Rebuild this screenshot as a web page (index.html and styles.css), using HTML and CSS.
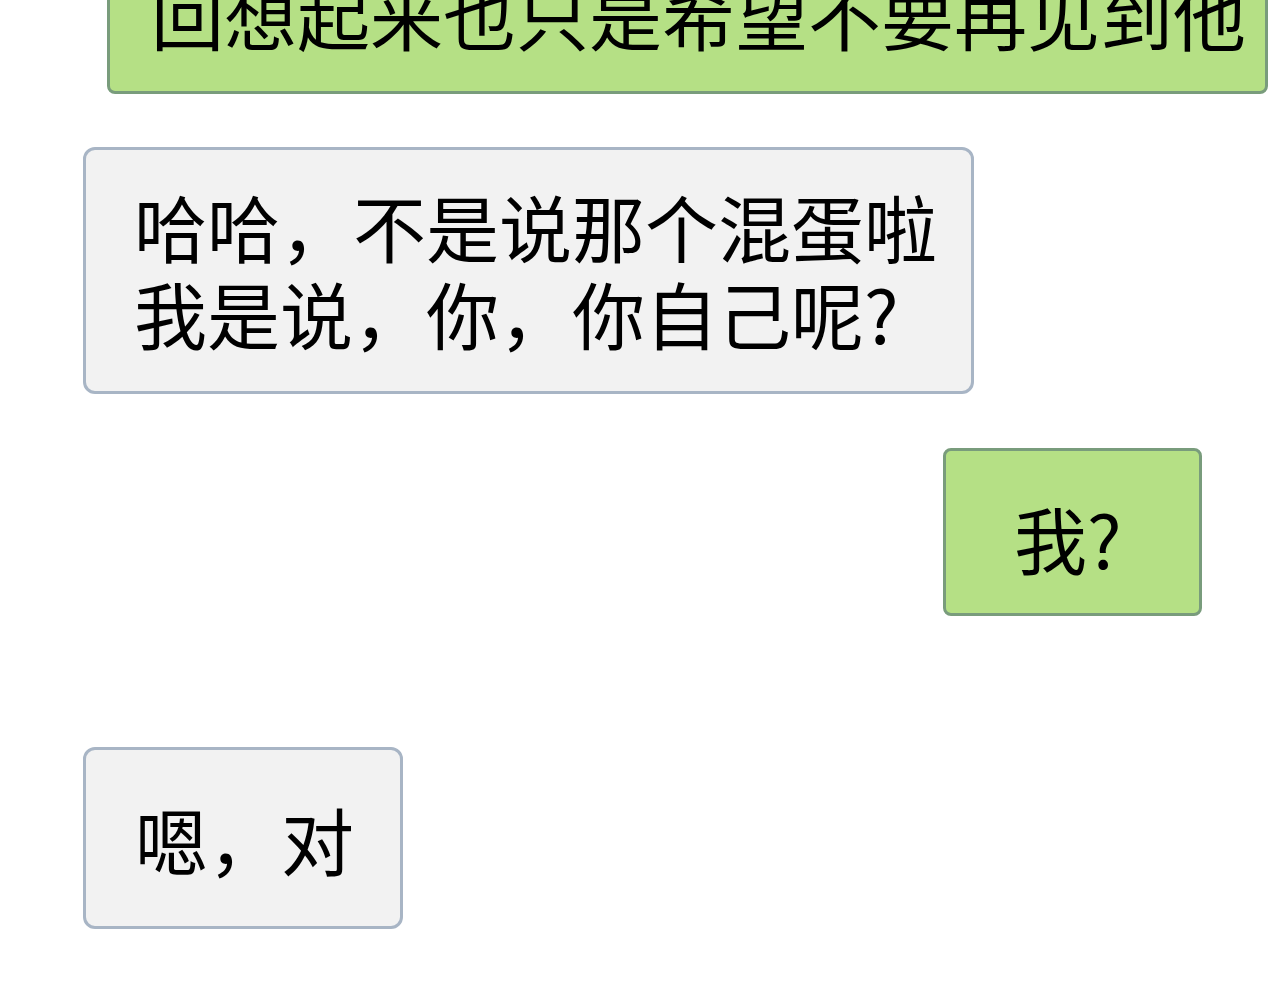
FILE: index.html
```html
<!DOCTYPE html>
<html lang="zh-CN">
<head>
    <meta charset="UTF-8">
    <meta name="viewport" content="width=device-width, initial-scale=1.0">
    <title>聊天</title>
    <link rel="stylesheet" href="styles.css">
</head>
<body>
    <div class="chat">
        <div class="bubble mine top-msg">回想起来也只是希望不要再见到他</div>
        <div class="bubble theirs long-msg">哈哈，不是说那个混蛋啦<br>我是说，你，你自己呢?</div>
        <div class="bubble mine short-msg">我?</div>
        <div class="bubble theirs reply-msg">嗯，对</div>
    </div>
</body>
</html>
```

FILE: styles.css
```css
body {
    margin: 0;
    background-color: #fff;
    font-family: "Noto Sans CJK SC", "Noto Sans", sans-serif;
    overflow: hidden;
}
.chat {
    display: flex;
    flex-direction: column;
    align-items: flex-start;
}
.bubble {
    box-sizing: border-box;
    font-size: 73px;
    line-height: 87px;
    color: #000;
    border: 3px solid;
    white-space: nowrap;
}
.mine {
    background-color: #b5e085;
    border-color: #799c7c;
    border-radius: 8px;
}
.theirs {
    background-color: #f2f2f2;
    border-color: #a8b5c5;
    border-radius: 12px;
}
.top-msg {
    margin-top: -65px;
    margin-left: 107px;
    width: 1161px;
    padding: 32px 0 34px 41px;
}
.long-msg {
    margin-top: 53px;
    margin-left: 83px;
    width: 891px;
    padding: 32px 0 35px 48px;
}
.short-msg {
    margin-top: 54px;
    margin-left: 943px;
    width: 259px;
    height: 168px;
    padding: 43px 0 0 68px;
}
.reply-msg {
    margin-top: 131px;
    margin-left: 83px;
    width: 320px;
    height: 182px;
    padding: 45px 0 0 49px;
}
```
